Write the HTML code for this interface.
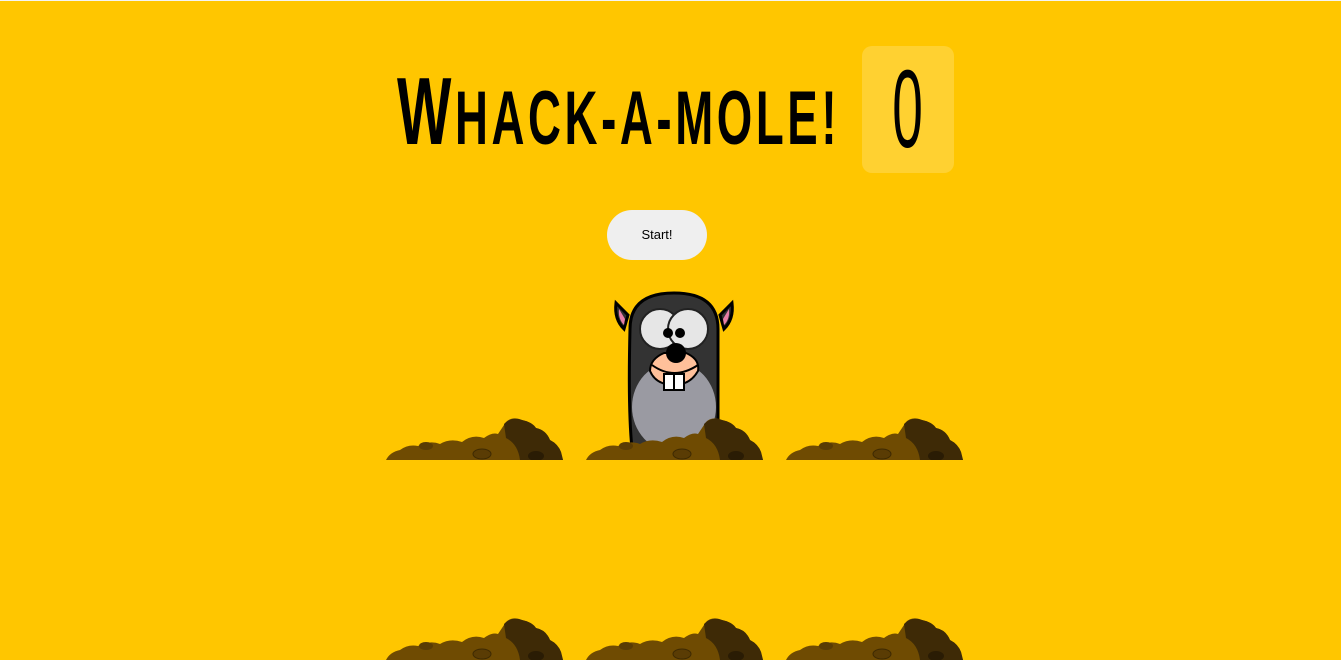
<!DOCTYPE html>
<html><head><style>
html,body{margin:0;padding:0;}
body{width:1341px;height:653px;background:#ffc600;overflow:hidden;position:relative;font-family:"Liberation Sans",sans-serif;border-top:1px solid #f4f4f4;box-sizing:border-box}
.title{position:absolute;left:397px;top:56px;font-family:"Liberation Sans Narrow","Liberation Sans",sans-serif;font-size:96px;line-height:110px;color:#000;white-space:nowrap;transform-origin:0 0;transform:scaleX(0.6);letter-spacing:6px;font-weight:bold}
.title small{font-size:76px}
.score{position:absolute;left:862px;top:45px;width:92px;height:127px;background:#ffd131;border-radius:10px;text-align:center;font-size:110px;line-height:127px;font-family:"Liberation Sans Narrow","Liberation Sans",sans-serif}
.score span{display:inline-block;transform:scaleX(0.5)}
.btn{position:absolute;left:607px;top:209px;width:100px;height:50px;background:#efefef;border-radius:25px;text-align:center;line-height:50px;font-size:13px;color:#000}
.dirt{position:absolute;width:177px;height:42px}
</style></head><body>
<div class="title">W<small>HACK-A-MOLE!</small></div>
<div class="score"><span>0</span></div>
<div class="btn">Start!</div>

<svg style="position:absolute;left:610px;top:288px" width="130" height="165" viewBox="0 0 130 165">
<path d="M18 26 L6 14 Q4 30 14 40 Z" fill="#333" stroke="#000" stroke-width="3"/>
<path d="M110 26 L122 14 Q124 30 114 40 Z" fill="#333" stroke="#000" stroke-width="3"/>
<path d="M15 30 L9 20 Q8 30 14 36 Z" fill="#e87ea6"/>
<path d="M113 30 L119 20 Q120 30 114 36 Z" fill="#e87ea6"/>
<path d="M20 40 Q20 4 64 4 Q108 4 108 40 L108 150 L22 160 Q18 120 20 40 Z" fill="#333" stroke="#000" stroke-width="3"/>
<ellipse cx="64" cy="118" rx="42" ry="45" fill="#9a9aa2"/>
<ellipse cx="50" cy="40" rx="20" ry="20" fill="#e6e6e6" stroke="#222" stroke-width="2"/>
<ellipse cx="78" cy="40" rx="20" ry="20" fill="#e6e6e6" stroke="#222" stroke-width="2"/>
<circle cx="58" cy="44" r="5" fill="#000"/><circle cx="70" cy="44" r="5" fill="#000"/>
<path d="M40 82 Q40 70 54 64 L76 64 Q90 70 88 82 Q80 96 64 96 Q46 96 40 82 Z" fill="#ffc09a" stroke="#000" stroke-width="2"/>
<circle cx="66" cy="64" r="10" fill="#000"/>
<path d="M42 76 Q64 92 88 76" fill="none" stroke="#000" stroke-width="2"/>
<rect x="54" y="85" width="20" height="16" fill="#fff" stroke="#000" stroke-width="2"/>
<line x1="64" y1="85" x2="64" y2="101" stroke="#000" stroke-width="2"/>
</svg>

<svg width="0" height="0" style="position:absolute">
<defs><g id="d">
<path d="M0 42 Q4 34 14 32 Q22 26 32 28 Q44 22 54 26 Q64 20 76 24 Q86 16 98 20 Q106 14 112 16 L120 4 Q126 -2 136 2 Q146 4 150 10 Q160 12 164 22 Q172 26 175 34 L177 42 Z" fill="#6f4b02"/>
<path d="M118 6 Q126 -2 136 2 Q146 4 150 10 Q160 12 164 22 Q172 26 175 34 L177 42 L134 42 Q132 26 120 20 Z" fill="#3e2a06"/>
<ellipse cx="96" cy="36" rx="9" ry="5" fill="#5a3c04" stroke="#3e2a02"/>
<ellipse cx="40" cy="28" rx="7" ry="4" fill="#5a3c04"/>
<ellipse cx="150" cy="38" rx="8" ry="5" fill="#2a1c04"/>
</g></defs></svg>
<svg class="dirt" style="left:386px;top:417px"><use href="#d"/></svg>
<svg class="dirt" style="left:586px;top:417px"><use href="#d"/></svg>
<svg class="dirt" style="left:786px;top:417px"><use href="#d"/></svg>
<svg class="dirt" style="left:386px;top:617px"><use href="#d"/></svg>
<svg class="dirt" style="left:586px;top:617px"><use href="#d"/></svg>
<svg class="dirt" style="left:786px;top:617px"><use href="#d"/></svg>
</body></html>
